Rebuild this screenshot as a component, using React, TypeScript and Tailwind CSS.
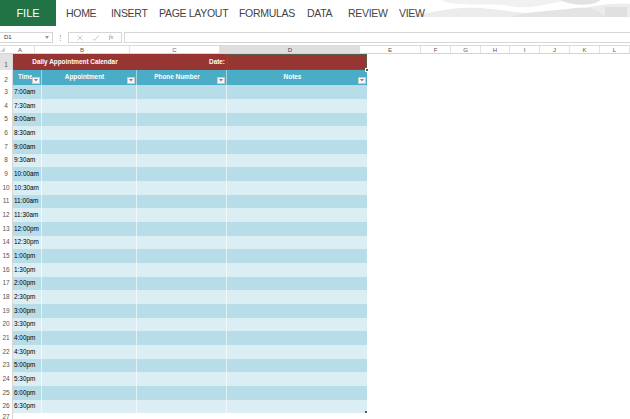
import React from "react";

const times = [
  "7:00am","7:30am","8:00am","8:30am","9:00am","9:30am","10:00am","10:30am",
  "11:00am","11:30am","12:00pm","12:30pm","1:00pm","1:30pm","2:00pm","2:30pm",
  "3:00pm","3:30pm","4:00pm","4:30pm","5:00pm","5:30pm","6:00pm","6:30pm",
];

const tabs: [string, string][] = [
  ["HOME", "w-[45px]"],
  ["INSERT", "w-[48px]"],
  ["PAGE LAYOUT", "w-[80px]"],
  ["FORMULAS", "w-[68px]"],
  ["DATA", "w-[41px]"],
  ["REVIEW", "w-[51px]"],
  ["VIEW", "w-[40px]"],
];

const cols: [string, string][] = [
  ["A", "w-[29px]"],
  ["B", "w-[95px]"],
  ["C", "w-[90px]"],
  ["D", "w-[140px]"],
  ["E", "w-[61px]"],
  ["F", "w-[30px]"],
  ["G", "w-[30px]"],
  ["H", "w-[29px]"],
  ["I", "w-[30px]"],
  ["J", "w-[30px]"],
  ["K", "w-[30px]"],
  ["L", "w-[30px]"],
];

function FilterBtn() {
  return (
    <div className="w-[8px] h-[7px] mb-[1px] mr-[1px] bg-[#f7f7f7] border border-[#c9c9c9] flex items-center justify-center shrink-0">
      <svg width="4" height="2.5" viewBox="0 0 4 2.5">
        <path d="M0 0 L4 0 L2 2.5 Z" fill="#808080" />
      </svg>
    </div>
  );
}

export default function App() {
  return (
    <div className="w-[630px] h-[419px] overflow-hidden bg-white relative font-['Liberation_Sans',Arial,sans-serif]">
      {/* Ribbon */}
      <div className="h-[26px] flex items-stretch relative">
        <svg className="absolute right-0 top-0" width="230" height="20" viewBox="0 0 230 20">
          <path d="M0 17 C30 14 50 6 80 8 C110 10 130 16 160 12 C185 9 200 2 230 4 L230 17 Z" fill="#ececec" />
          <path d="M40 0 C60 8 90 2 110 6 C130 10 150 3 170 0 Z" fill="#f1f1f1" />
          <path d="M110 17 C130 10 150 12 175 8 C190 6 200 10 205 17 Z" fill="#e4e4e4" />
          <path d="M160 0 C170 5 185 6 195 3 C200 1 200 0 200 0 Z" fill="#e2e2e2" />
          <rect x="205" y="7" width="22" height="10" fill="#e0e0e0" />
        </svg>
        <div className="w-[56px] bg-[#217346] text-white text-[11px] flex items-center justify-center pt-[1px] relative">
          FILE
        </div>
        <div className="flex items-center ml-[10px] text-[10.5px] text-[#444] pt-[2px] relative tracking-[-0.3px]">
          {tabs.map(([t, w]) => (
            <span key={t} className={w}>
              {t}
            </span>
          ))}
        </div>
      </div>

      {/* Formula bar */}
      <div className="h-[6px]" />
      <div className="h-[11px] flex items-stretch">
        <div className="w-[53px] border border-l-0 border-[#d6d6d6] flex items-center justify-between pl-[4px] pr-[3px] text-[6px] text-[#333]">
          <span>D1</span>
          <svg width="4" height="3" viewBox="0 0 4 3">
            <path d="M0 0 L4 0 L2 3 Z" fill="#999" />
          </svg>
        </div>
        <div className="w-[15px] flex items-center justify-center">
          <div className="w-[1px] h-[6px] border-l border-dotted border-[#bbb]" />
        </div>
        <div className="w-[54px] border border-[#d6d6d6] flex items-center justify-around px-[3px] text-[#bbb]">
          <svg width="6" height="6" viewBox="0 0 6 6">
            <path d="M0.5 0.5 L5.5 5.5 M5.5 0.5 L0.5 5.5" stroke="#bdbdbd" strokeWidth="0.8" />
          </svg>
          <svg width="7" height="6" viewBox="0 0 7 6">
            <path d="M0.5 3.5 L2.5 5.5 L6.5 0.5" stroke="#bdbdbd" strokeWidth="0.8" fill="none" />
          </svg>
          <span className="text-[6px] italic font-['Liberation_Serif',serif] text-[#777]">fx</span>
        </div>
        <div className="w-[2px]" />
        <div className="flex-1 border border-r-0 border-[#d6d6d6]" />
      </div>
      <div className="h-[3px] border-b border-[#dcdcdc]" />

      {/* Column headers */}
      <div className="h-[8px] flex border-b border-[#d4d4d4]">
        <div className="w-[13px] flex items-end justify-end pr-[1px] pb-[1px]">
          <svg width="5" height="5" viewBox="0 0 5 5">
            <path d="M5 0 L5 5 L0 5 Z" fill="#d0d0d0" />
          </svg>
        </div>
        {cols.map(([c, w]) => (
          <div
            key={c}
            className={`${w} shrink-0 flex items-center justify-center text-[6px] leading-none ${
              c === "D" ? "bg-[#dedede] text-[#444]" : "text-[#555] border-r border-[#e2e2e2]"
            }`}
          >
            {c}
          </div>
        ))}
      </div>

      {/* Grid */}
      <div className="flex">
        {/* Row headers */}
        <div className="w-[13px] shrink-0 border-r border-[#d8d8d8] text-[6.5px] text-[#555] leading-none">
          <div className="h-[16px] bg-[#e2e2e2] flex items-end justify-center pb-[2px]">1</div>
          <div className="h-[15px] flex items-end justify-center pb-[2px]">2</div>
          {times.map((_, i) => (
            <div
              key={i}
              className={`${i % 3 === 2 ? "h-[13px]" : "h-[14px]"} flex items-center justify-center`}
            >
              {i + 3}
            </div>
          ))}
          <div className="h-[8px] flex items-start justify-center pt-[1px]">27</div>
        </div>

        {/* Table */}
        <div className="w-[354px] shrink-0 text-[6.4px] leading-none">
          {/* Row 1 */}
          <div className="h-[16px] flex bg-[#973533] text-white font-bold">
            <div className="w-[124px] flex items-center justify-center">Daily Appointment Calendar</div>
            <div className="w-[90px] flex items-center justify-end pr-[2px]">Date:</div>
            <div className="w-[140px] border-[1.5px] border-[#5c5a4a] relative">
              <div className="absolute -right-[3px] -bottom-[3px] w-[4px] h-[4px] bg-[#5c5a4a] border border-white" />
            </div>
          </div>
          {/* Row 2 */}
          <div className="h-[15px] flex bg-[#4bacc6] text-white font-bold">
            <div className="w-[29px] flex items-end border-r border-white/50">
              <div className="flex-1 self-center text-center pl-[5px] overflow-hidden whitespace-nowrap">Time</div>
              <FilterBtn />
            </div>
            <div className="w-[95px] flex items-end border-r border-white/50">
              <div className="flex-1 self-center text-center">Appointment</div>
              <FilterBtn />
            </div>
            <div className="w-[90px] flex items-end border-r border-white/50">
              <div className="flex-1 self-center text-center">Phone Number</div>
              <FilterBtn />
            </div>
            <div className="w-[140px] flex items-end">
              <div className="flex-1 self-center text-center">Notes</div>
              <FilterBtn />
            </div>
          </div>
          {/* Data rows */}
          {times.map((t, i) => (
            <div
              key={t}
              className={`${i % 3 === 2 ? "h-[13px]" : "h-[14px]"} flex ${
                i % 2 === 0 ? "bg-[#b7dde8]" : "bg-[#dbeef3]"
              } text-black`}
            >
              <div className="w-[29px] flex items-center pl-[1px] border-r border-white/60">{t}</div>
              <div className="w-[95px] border-r border-white/60" />
              <div className="w-[90px] border-r border-white/60" />
              <div className="w-[140px] relative">
                {i === times.length - 1 && (
                  <div className="absolute right-0 bottom-0 w-[2px] h-[2px] bg-[#555]" />
                )}
              </div>
            </div>
          ))}
        </div>
      </div>
    </div>
  );
}
